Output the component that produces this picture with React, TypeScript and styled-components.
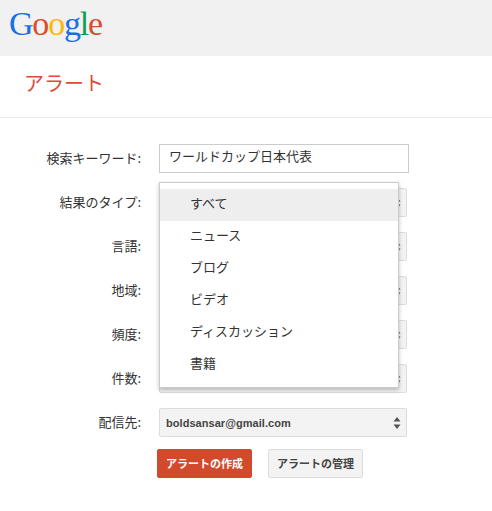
import React from 'react'
import styled, { createGlobalStyle } from 'styled-components'

const GlobalStyle = createGlobalStyle`
  html, body {
    margin: 0;
    padding: 0;
    background: #fff;
  }
  body {
    font-family: Arial, "Liberation Sans", "Noto Sans CJK JP", sans-serif;
    color: #333;
  }
`

const Header = styled.div`
  height: 56px;
  background: #f1f1f1;
  padding-left: 9px;
  box-sizing: border-box;
`

const Logo = styled.div`
  font-family: "Liberation Serif", serif;
  font-size: 34px;
  line-height: 48px;
  letter-spacing: -1.2px;
`

const LogoLetter = styled.span<{ $color: string }>`
  color: ${props => props.$color};
`

const TitleBar = styled.div`
  height: 62px;
  box-sizing: border-box;
  border-bottom: 1px solid #ebebeb;
  padding: 11px 0 0 24px;
  font-family: "Noto Sans CJK JP", sans-serif;
  font-size: 20px;
  line-height: 32px;
  color: #dd4b39;
`

const Form = styled.div`
  position: relative;
  padding-top: 26px;
`

const Row = styled.div`
  display: flex;
  align-items: center;
  height: 29px;
  margin-bottom: 15px;
`

const Label = styled.div`
  width: 141px;
  margin-right: 18px;
  padding-bottom: 2px;
  text-align: right;
  font-family: "Noto Sans CJK JP", sans-serif;
  font-size: 13px;
  color: #333;
`

const TextInput = styled.div`
  width: 250px;
  height: 29px;
  box-sizing: border-box;
  border: 1px solid #ccc;
  padding-left: 9px;
  font-family: "Noto Sans CJK JP", sans-serif;
  font-size: 13px;
  line-height: 21px;
  color: #333;
`

const SelectBox = styled.div`
  width: 248px;
  height: 29px;
  box-sizing: border-box;
  border: 1px solid #dcdcdc;
  border-radius: 2px;
  background: #f3f3f3;
  padding: 0 5px 0 6px;
  display: flex;
  align-items: center;
  justify-content: space-between;
  font-family: "Liberation Sans", sans-serif;
  font-size: 11px;
  font-weight: bold;
  letter-spacing: 0.05px;
  color: #444;
`

const Buttons = styled.div`
  display: flex;
  gap: 16px;
  margin: -3px 0 0 157px;
`

const Button = styled.div<{ $primary?: boolean }>`
  width: 95px;
  height: 29px;
  box-sizing: border-box;
  border: 1px solid ${props => (props.$primary ? '#d14836' : '#dcdcdc')};
  border-radius: 2px;
  background: ${props => (props.$primary ? '#d14a2c' : '#f3f3f3')};
  color: ${props => (props.$primary ? '#fff' : '#444')};
  font-family: "Noto Sans CJK JP", sans-serif;
  font-size: 11px;
  font-weight: bold;
  line-height: 27px;
  text-align: center;
`

const Menu = styled.div`
  position: absolute;
  left: 159px;
  top: 64px;
  width: 240px;
  height: 206px;
  box-sizing: border-box;
  padding-top: 6px;
  background: #fff;
  border: 1px solid #ccc;
  box-shadow: 0 2px 4px rgba(0, 0, 0, 0.25);
`

const MenuItem = styled.div<{ $active?: boolean }>`
  height: 32px;
  padding-left: 30px;
  background: ${props => (props.$active ? '#eeeeee' : 'transparent')};
  font-family: "Noto Sans CJK JP", sans-serif;
  font-size: 13px;
  line-height: 28px;
  color: #333;
`

const Arrows = () => (
  <svg width="8" height="12" viewBox="0 0 8 12">
    <path d="M4 0 L7.5 4.5 L0.5 4.5 Z M4 12 L7.5 7.5 L0.5 7.5 Z" fill="#555" />
  </svg>
)

const labels = ['結果のタイプ:', '言語:', '地域:', '頻度:', '件数:']
const options = ['すべて', 'ニュース', 'ブログ', 'ビデオ', 'ディスカッション', '書籍']

const App: React.FC = () => {
  return (
    <>
      <GlobalStyle />
      <Header>
        <Logo>
          <LogoLetter $color="#1a6fe8">G</LogoLetter>
          <LogoLetter $color="#dd4b2a">o</LogoLetter>
          <LogoLetter $color="#fdb900">o</LogoLetter>
          <LogoLetter $color="#1a6fe8">g</LogoLetter>
          <LogoLetter $color="#0f9d58">l</LogoLetter>
          <LogoLetter $color="#dd4b2a">e</LogoLetter>
        </Logo>
      </Header>
      <TitleBar>アラート</TitleBar>
      <Form>
        <Row>
          <Label>検索キーワード:</Label>
          <TextInput>ワールドカップ日本代表</TextInput>
        </Row>
        {labels.map(label => (
          <Row key={label}>
            <Label>{label}</Label>
            <SelectBox>
              <span />
              <Arrows />
            </SelectBox>
          </Row>
        ))}
        <Row>
          <Label>配信先:</Label>
          <SelectBox>
            <span>boldsansar@gmail.com</span>
            <Arrows />
          </SelectBox>
        </Row>
        <Buttons>
          <Button $primary>アラートの作成</Button>
          <Button>アラートの管理</Button>
        </Buttons>
        <Menu>
          {options.map((option, i) => (
            <MenuItem key={option} $active={i === 0}>
              {option}
            </MenuItem>
          ))}
        </Menu>
      </Form>
    </>
  )
}

export default App
